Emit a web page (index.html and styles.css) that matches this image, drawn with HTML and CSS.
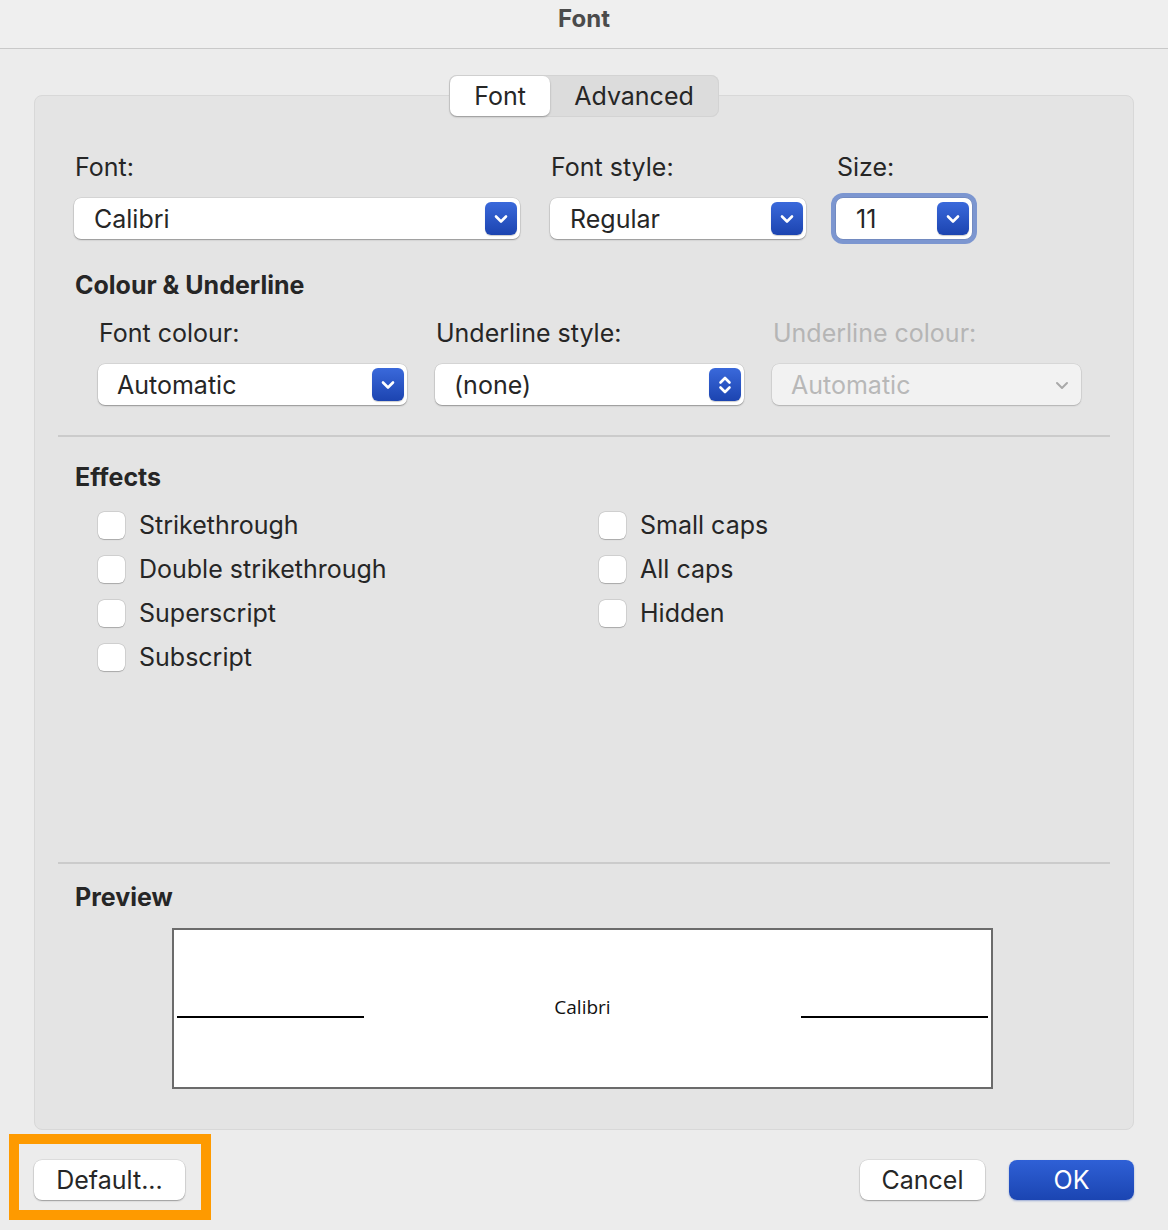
FILE: index.html
```html
<!DOCTYPE html>
<html>
<head>
<meta charset="utf-8">
<title>Font</title>
<link rel="stylesheet" href="styles.css">
</head>
<body>

<div class="window">
  <div class="titlebar">Font</div>

  <div class="dialog">
    <div class="tabs">
      <button type="button" class="tab active">Font</button>
      <button type="button" class="tab">Advanced</button>
    </div>

    <div class="panel">
      <div class="section font-row">
        <div class="field f-font">
          <label>Font:</label>
          <div class="select">
            <span class="value">Calibri</span>
            <span class="arrow">
              <svg width="16" height="16" viewBox="0 0 16 16"><path d="M3 5.5 L8 10.5 L13 5.5" /></svg>
            </span>
          </div>
        </div>
        <div class="field f-style">
          <label>Font style:</label>
          <div class="select">
            <span class="value">Regular</span>
            <span class="arrow">
              <svg width="16" height="16" viewBox="0 0 16 16"><path d="M3 5.5 L8 10.5 L13 5.5" /></svg>
            </span>
          </div>
        </div>
        <div class="field f-size">
          <label>Size:</label>
          <div class="select focused">
            <span class="value">11</span>
            <span class="arrow">
              <svg width="16" height="16" viewBox="0 0 16 16"><path d="M3 5.5 L8 10.5 L13 5.5" /></svg>
            </span>
          </div>
        </div>
      </div>

      <div class="section colour">
        <h3>Colour &amp; Underline</h3>
        <div class="colour-row">
          <div class="field">
            <label>Font colour:</label>
            <div class="select">
              <span class="value">Automatic</span>
              <span class="arrow">
                <svg width="16" height="16" viewBox="0 0 16 16"><path d="M3 5.5 L8 10.5 L13 5.5" /></svg>
              </span>
            </div>
          </div>
          <div class="field">
            <label>Underline style:</label>
            <div class="select">
              <span class="value">(none)</span>
              <span class="arrow">
                <svg width="16" height="24" viewBox="0 0 16 24"><path d="M3.5 9.5 L8 5 L12.5 9.5 M3.5 14.5 L8 19 L12.5 14.5" /></svg>
              </span>
            </div>
          </div>
          <div class="field disabled">
            <label>Underline colour:</label>
            <div class="select">
              <span class="value">Automatic</span>
              <span class="arrow">
                <svg width="16" height="14" viewBox="0 0 16 14"><path d="M3 5 L8 10 L13 5" /></svg>
              </span>
            </div>
          </div>
        </div>
      </div>

      <hr class="sep">

      <div class="section effects">
        <h3>Effects</h3>
        <div class="checks">
          <div class="col">
            <label class="check"><span class="box"></span>Strikethrough</label>
            <label class="check"><span class="box"></span>Double strikethrough</label>
            <label class="check"><span class="box"></span>Superscript</label>
            <label class="check"><span class="box"></span>Subscript</label>
          </div>
          <div class="col">
            <label class="check"><span class="box"></span>Small caps</label>
            <label class="check"><span class="box"></span>All caps</label>
            <label class="check"><span class="box"></span>Hidden</label>
          </div>
        </div>
      </div>

      <hr class="sep">

      <div class="section preview-section">
        <h3>Preview</h3>
        <div class="preview">
          <span class="rule"></span>
          <span class="sample">Calibri</span>
          <span class="rule"></span>
        </div>
      </div>
    </div>

    <div class="footer">
      <div class="highlight">
        <button type="button" class="btn">Default...</button>
      </div>
      <div class="actions">
        <button type="button" class="btn">Cancel</button>
        <button type="button" class="btn primary">OK</button>
      </div>
    </div>
  </div>
</div>

</body>
</html>
```

FILE: styles.css
```css
* {
  box-sizing: border-box;
}

body {
  margin: 0;
  background: #ececec;
  font-family: Inter, "Liberation Sans", sans-serif;
  color: #262626;
}

.window {
  width: 1168px;
  height: 1230px;
  background: #ececec;
}

/* title bar */

.titlebar {
  height: 49px;
  padding-top: 1px;
  line-height: 36px;
  text-align: center;
  font-size: 24px;
  font-weight: 700;
  color: #4b4b4b;
  background: #efefef;
  border-bottom: 1px solid #c9c9c9;
}

.dialog {
  padding: 0 34px;
}

/* segmented tabs */

.tabs {
  position: relative;
  z-index: 1;
  display: flex;
  width: 270px;
  height: 42px;
  margin: 26px auto -22px;
  padding: 1px;
  background: #dcdcdc;
  border-radius: 8px;
  box-shadow: inset 0 0 0 1px #d3d3d3;
}

.tab {
  border: 0;
  background: none;
  font-family: inherit;
  font-size: 25px;
  line-height: 38px;
  color: #262626;
  padding: 0;
  border-radius: 7px;
}

.tab.active {
  width: 100px;
  background: #fff;
  box-shadow: 0 1px 2px rgba(0, 0, 0, 0.3);
}

.tab:not(.active) {
  flex: 1;
}

/* main panel */

.panel {
  height: 1035px;
  padding: 56px 23px 0;
  background: #e4e4e4;
  border: 1px solid #d8d8d8;
  border-radius: 8px;
}

.section {
  padding: 0 17px;
}

h3 {
  margin: 0;
  font-size: 25px;
  line-height: 30px;
  font-weight: 700;
  color: #262626;
}

.field label {
  display: block;
  font-size: 25px;
  line-height: 30px;
  margin-bottom: 16px;
  padding-left: 1px;
}

.font-row {
  display: flex;
  padding-left: 16px;
}

.f-font {
  width: 446px;
}

.f-style {
  width: 256px;
  margin-left: 30px;
}

.f-size {
  width: 136px;
  margin-left: 30px;
}

/* popup buttons */

.select {
  display: flex;
  align-items: center;
  height: 41px;
  padding: 0 3px 0 20px;
  background: #fff;
  border-radius: 7px;
  box-shadow: 0 0 0 0.5px rgba(0, 0, 0, 0.12), 0 1px 1.5px rgba(0, 0, 0, 0.3);
}

.select.focused {
  box-shadow: 0 0 0 0.5px rgba(0, 0, 0, 0.15), 0 0 0 5px #7c96d0;
}

.value {
  flex: 1;
  font-size: 25px;
  color: #262626;
}

.arrow {
  display: flex;
  align-items: center;
  justify-content: center;
  width: 32px;
  height: 33px;
  border-radius: 6px;
  background: linear-gradient(#3a69db, #1c44b0);
  box-shadow: 0 1px 1px rgba(0, 0, 0, 0.2);
}

.arrow svg path {
  fill: none;
  stroke: #fff;
  stroke-width: 2.6;
  stroke-linecap: round;
  stroke-linejoin: round;
}

.colour h3 {
  margin-top: 31px;
}

.colour-row {
  display: flex;
  gap: 28px;
  margin-top: 18px;
  padding-left: 23px;
}

.colour-row .field {
  width: 309px;
}

.colour-row .select {
  padding-left: 19px;
}

.disabled label {
  color: #b5b5b5;
}

.disabled .select {
  background: #f2f2f2;
  box-shadow: 0 0 0 0.5px rgba(0, 0, 0, 0.1), 0 1px 1.5px rgba(0, 0, 0, 0.18);
}

.disabled .value {
  color: #b8b8b8;
}

.disabled .arrow {
  background: none;
  box-shadow: none;
}

.disabled .arrow svg path {
  stroke: #a9a9a9;
  stroke-width: 2;
}

.sep {
  margin: 30px 0 0;
  height: 0;
  border: 0;
  border-top: 2px solid #cbcbcb;
}

/* effects */

.effects {
  height: 395px;
  padding-top: 25px;
}

.checks {
  display: flex;
  margin-top: 11px;
  padding-left: 23px;
}

.col {
  display: flex;
  flex-direction: column;
}

.col:first-child {
  width: 501px;
}

.check {
  display: flex;
  align-items: center;
  height: 44px;
  font-size: 25px;
}

.box {
  width: 27px;
  height: 27px;
  margin-right: 14px;
  background: #fff;
  border-radius: 6px;
  box-shadow: 0 0 0 0.5px rgba(0, 0, 0, 0.14), 0 0.5px 1px rgba(0, 0, 0, 0.2);
}

/* preview */

.preview-section {
  padding-top: 18px;
}

.preview {
  display: flex;
  align-items: center;
  width: 821px;
  height: 161px;
  margin: 16px 0 0 97px;
  padding: 0 3px;
  background: #fff;
  border: 2px solid #6b6b6b;
}

.rule {
  width: 187px;
  height: 2px;
  margin-top: 16px;
  background: #000;
}

.sample {
  flex: 1;
  text-align: center;
  font-family: "Open Sans", sans-serif;
  font-size: 19px;
  color: #111;
  margin-top: -3px;
}

/* bottom buttons */

.footer {
  display: flex;
  justify-content: space-between;
  align-items: flex-start;
}

.highlight {
  margin: 4px 0 0 -25px;
  padding: 16px 16px 10px 15px;
  border: 10px solid #fe9a00;
}

.btn {
  height: 40px;
  padding: 0;
  font-family: inherit;
  font-size: 25px;
  color: #262626;
  background: #fff;
  border: 0;
  border-radius: 8px;
  box-shadow: 0 0 0 0.5px rgba(0, 0, 0, 0.12), 0 1px 1.5px rgba(0, 0, 0, 0.3);
}

.highlight .btn {
  width: 151px;
}

.actions {
  display: flex;
  gap: 24px;
  margin-top: 30px;
}

.actions .btn {
  width: 125px;
}

.btn.primary {
  color: #fff;
  background: linear-gradient(#2f60d6, #1b45b2);
  box-shadow: 0 1px 2px rgba(27, 69, 178, 0.4);
}
```
